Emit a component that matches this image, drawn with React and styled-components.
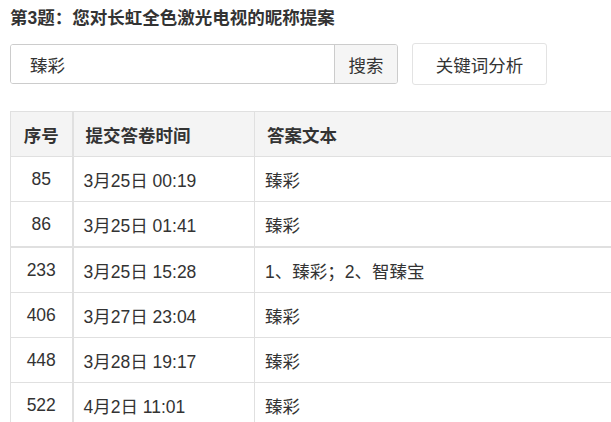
import React from 'react';
import styled, { createGlobalStyle } from 'styled-components';

const GlobalStyle = createGlobalStyle`
  html, body {
    margin: 0;
    padding: 0;
    background: #fff;
    overflow: hidden;
  }
  body {
    font-family: "Liberation Sans", "Noto Sans CJK SC", sans-serif;
    color: #333;
  }
`;

const Page = styled.div`
  padding: 6px 0 0 10px;
  width: 800px;
`;

const Title = styled.h3`
  margin: 0;
  font-size: 17.5px;
  line-height: 24px;
  font-weight: bold;
  color: #333;
`;

const SearchBar = styled.div`
  display: flex;
  align-items: center;
  margin-top: 13px;
  height: 42px;
`;

const InputGroup = styled.div`
  display: flex;
  height: 40px;
  border: 1px solid #ccc;
  border-radius: 3px;
  box-sizing: border-box;
  overflow: hidden;
`;

const SearchInput = styled.input`
  width: 323px;
  border: none;
  outline: none;
  padding: 0 0 0 19px;
  box-sizing: border-box;
  font-family: inherit;
  font-size: 17.5px;
  color: #333;
  background: #fff;
`;

const AddonButton = styled.button`
  width: 63px;
  border: none;
  border-left: 1px solid #ccc;
  background: #f5f5f5;
  font-family: inherit;
  font-size: 17.5px;
  color: #333;
  padding: 0;
`;

const PlainButton = styled.button`
  margin-left: 14px;
  width: 135px;
  height: 42px;
  border: 1px solid #e3e3e3;
  border-radius: 3px;
  background: #fff;
  font-family: inherit;
  font-size: 17.5px;
  color: #333;
  padding: 0;
`;

const Table = styled.table`
  margin-top: 26px;
  border-collapse: collapse;
  width: 780px;
  table-layout: fixed;
  font-size: 17.5px;
`;

const Th = styled.th`
  height: 44px;
  padding: 0 ${p => (p.$center ? 0 : '12px')};
  background: #f4f4f4;
  border: 1px solid #e0e0e0;
  border-right-width: ${p => (p.$thick ? '2px' : '1px')};
  text-align: ${p => (p.$center ? 'center' : 'left')};
  font-weight: bold;
  color: #333;
`;

const Td = styled.td`
  height: 44px;
  padding: 0 ${p => (p.$center ? 0 : '10px')};
  border: 1px solid #e0e0e0;
  border-right-width: ${p => (p.$thick ? '2px' : '1px')};
  border-top-width: ${p => (p.$thickTop ? '2px' : '1px')};
  text-align: ${p => (p.$center ? 'center' : 'left')};
  color: #333;
  white-space: nowrap;
`;

const rows = [
  { no: 85, time: '3月25日 00:19', text: '臻彩' },
  { no: 86, time: '3月25日 01:41', text: '臻彩' },
  { no: 233, time: '3月25日 15:28', text: '1、臻彩；2、智臻宝', thick: true },
  { no: 406, time: '3月27日 23:04', text: '臻彩' },
  { no: 448, time: '3月28日 19:17', text: '臻彩' },
  { no: 522, time: '4月2日 11:01', text: '臻彩' },
];

const App = () => {
  return (
    <Page>
      <GlobalStyle />
      <Title>第3题：您对长虹全色激光电视的昵称提案</Title>
      <SearchBar>
        <InputGroup>
          <SearchInput defaultValue="臻彩" />
          <AddonButton>搜索</AddonButton>
        </InputGroup>
        <PlainButton>关键词分析</PlainButton>
      </SearchBar>
      <Table>
        <colgroup>
          <col style={{ width: 62 }} />
          <col style={{ width: 182 }} />
          <col />
        </colgroup>
        <thead>
          <tr>
            <Th $center $thick>序号</Th>
            <Th>提交答卷时间</Th>
            <Th>答案文本</Th>
          </tr>
        </thead>
        <tbody>
          {rows.map(r => (
            <tr key={r.no}>
              <Td $center $thick $thickTop={r.thick}>{r.no}</Td>
              <Td $thickTop={r.thick}>{r.time}</Td>
              <Td $thickTop={r.thick}>{r.text}</Td>
            </tr>
          ))}
        </tbody>
      </Table>
    </Page>
  );
};

export default App;
